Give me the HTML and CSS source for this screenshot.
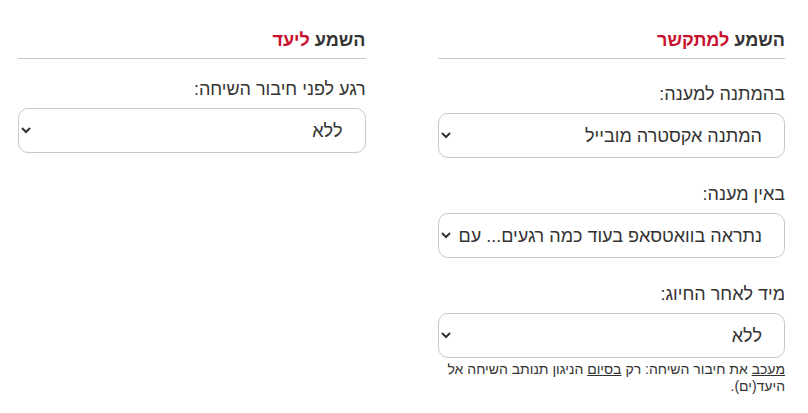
FILE: index.html
```html
<!DOCTYPE html>
<html lang="he" dir="rtl">
<head>
	<meta charset="utf-8">
	<title>השמעות</title>
	<link rel="stylesheet" href="styles.css">
</head>
<body>
<div class="wrap">
	<div class="col">
		<h2 class="head">השמע <span>למתקשר</span></h2>
		<div class="field first">
			<label for="wait">בהמתנה למענה:</label>
			<select id="wait">
				<option>המתנה אקסטרה מובייל</option>
			</select>
		</div>
		<div class="field">
			<label for="noans">באין מענה:</label>
			<select id="noans">
				<option>נתראה בוואטסאפ בעוד כמה רגעים... עם ועדכונים</option>
			</select>
		</div>
		<div class="field">
			<label for="after">מיד לאחר החיוג:</label>
			<select id="after">
				<option>ללא</option>
			</select>
			<p class="note"><u>מעכב</u> את חיבור השיחה: רק <u>בסיום</u> הניגון תנותב השיחה אל היעד(ים).</p>
		</div>
	</div>
	<div class="col">
		<h2 class="head">השמע <span>ליעד</span></h2>
		<div class="field">
			<label for="before">רגע לפני חיבור השיחה:</label>
			<select id="before">
				<option>ללא</option>
			</select>
		</div>
	</div>
</div>
</body>
</html>
```

FILE: styles.css
```css
html{
	background-color: #fff;
}
body{
	margin: 0;
	font-family: "Liberation Sans", "Open Sans", sans-serif;
	color: #333;
}
.wrap{
	display: flex;
	gap: 72px;
	padding: 28px 23px 0 18px;
}
.col{
	flex: 1;
}
.head{
	margin: 0;
	padding-bottom: 6px;
	font-size: 18px;
	font-weight: bold;
	line-height: 24px;
	border-bottom: 1px solid #c8c8c8;
}
.head span{
	color: #c8102e;
}
.field{
	padding-top: 18px;
}
.field.first{
	padding-top: 23px;
}
.field + .field{
	padding-top: 24px;
}
label{
	display: block;
	font-size: 18px;
	line-height: 24px;
	margin-bottom: 7px;
}
select{
	display: block;
	width: 100%;
	height: 45px;
	padding: 0 18px 0 4px;
	font-family: inherit;
	font-size: 18px;
	color: #333;
	background-color: #fff;
	border: 1px solid #c8c8c8;
	border-radius: 10px;
}
.note{
	margin: 3px 0 0;
	font-size: 14px;
	line-height: 17px;
}
```
